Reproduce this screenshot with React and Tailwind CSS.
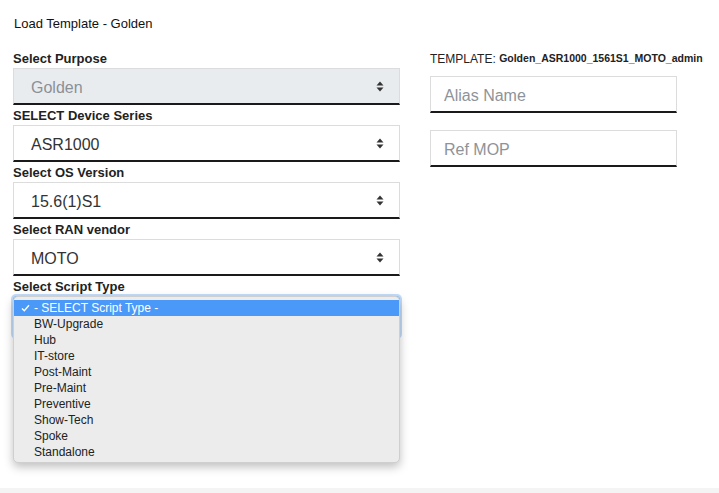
import React from "react";

const Arrows = () => (
  <svg width="8" height="11" viewBox="0 0 8 11" className="shrink-0">
    <path d="M4 0.5 L7.5 4.5 L0.5 4.5 Z" fill="#333" />
    <path d="M4 10.5 L7.5 6.5 L0.5 6.5 Z" fill="#333" />
  </svg>
);

function Select({ value, disabled }) {
  return (
    <div
      className={`h-[37px] flex items-center justify-between pl-[17px] pr-[15px] border border-[#dcdcdc] border-b-2 border-b-[#1a1a1a] ${
        disabled ? "bg-[#e9ecef] text-[#8b9096]" : "bg-white text-[#333]"
      }`}
    >
      <span className="text-[16px] pt-[3px]">{value}</span>
      <Arrows />
    </div>
  );
}

function Label({ children }) {
  return <div className="h-[20px] flex items-center pt-[2px] text-[13px] font-bold text-[#222]">{children}</div>;
}

const items = [
  "BW-Upgrade",
  "Hub",
  "IT-store",
  "Post-Maint",
  "Pre-Maint",
  "Preventive",
  "Show-Tech",
  "Spoke",
  "Standalone",
];

export default function App() {
  return (
    <div
      className="relative w-[719px] h-[493px] bg-white overflow-hidden"
      style={{ fontFamily: '"Liberation Sans", Arial, sans-serif' }}
    >
      <div className="pl-[14px] pt-[14px] h-[48px] text-[13px] text-[#111]">Load Template - Golden</div>
      <div className="flex pl-[13px]">
        <div className="w-[387px] flex flex-col">
          <Label>Select Purpose</Label>
          <Select value="Golden" disabled />
          <Label>SELECT Device Series</Label>
          <Select value="ASR1000" />
          <Label>Select OS Version</Label>
          <Select value="15.6(1)S1" />
          <Label>Select RAN vendor</Label>
          <Select value="MOTO" />
          <Label>Select Script Type</Label>
          <div className="relative">
            <div className="h-[41px] rounded-[3px] border border-[#8fc0f5] bg-white shadow-[0_0_0_2px_rgba(120,180,245,0.45)]" />
            <div className="absolute left-0 top-0 w-[387px] h-[167px] rounded-[5px] bg-[#ececec] border border-[#cfcfcf] shadow-[0_4px_10px_rgba(0,0,0,0.25)] pt-[3px] text-[12px] text-[#222] z-10">
              <div className="h-[16px] flex items-center bg-[#4a98f8] text-white">
                <span className="w-[20px] flex justify-end pr-[4px] pl-[2px]">
                  <svg width="9" height="8" viewBox="0 0 9 8">
                    <path d="M1 4.5 L3.3 6.8 L8 1.2" stroke="white" strokeWidth="1.4" fill="none" />
                  </svg>
                </span>
                <span>- SELECT Script Type -</span>
              </div>
              {items.map((it) => (
                <div key={it} className="h-[16px] flex items-center pl-[20px]">
                  {it}
                </div>
              ))}
            </div>
          </div>
        </div>
        <div className="ml-[30px] w-[247px] flex flex-col">
          <div className="h-[20px] flex items-center pt-[2px] text-[12px] text-[#222]">
            TEMPLATE:&nbsp;<span className="text-[10.5px] font-bold">Golden_ASR1000_1561S1_MOTO_admin</span>
          </div>
          <div className="mt-[8px] h-[37px] flex items-center pt-[3px] pl-[13px] border border-[#dcdcdc] border-b-2 border-b-[#1a1a1a] text-[16px] text-[#8e9399]">
            Alias Name
          </div>
          <div className="mt-[17px] h-[37px] flex items-center pt-[3px] pl-[13px] border border-[#dcdcdc] border-b-2 border-b-[#1a1a1a] text-[16px] text-[#8e9399]">
            Ref MOP
          </div>
        </div>
      </div>
      <div className="absolute left-0 right-0 bottom-0 h-[5px] bg-[#f4f4f4]" />
    </div>
  );
}
